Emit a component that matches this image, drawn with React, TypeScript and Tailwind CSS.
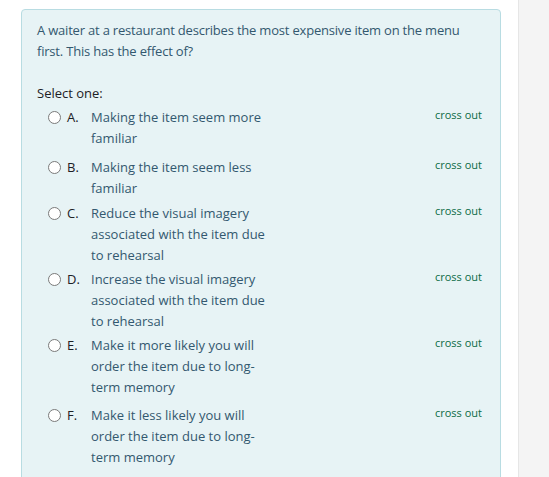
const options = [
  { letter: "A.", text: "Making the item seem more familiar", extra: "mt-0" },
  { letter: "B.", text: "Making the item seem less familiar", extra: "mt-[8px]" },
  { letter: "C.", text: "Reduce the visual imagery associated with the item due to rehearsal", extra: "mt-[4px]" },
  { letter: "D.", text: "Increase the visual imagery associated with the item due to rehearsal", extra: "mt-[3px]" },
  { letter: "E.", text: "Make it more likely you will order the item due to long-term memory", extra: "mt-[3px]" },
  { letter: "F.", text: "Make it less likely you will order the item due to long-term memory", extra: "mt-[7px]" },
];

export default function App() {
  return (
    <div
      className="flex h-[477px] w-[549px] overflow-hidden bg-white"
      style={{ fontFamily: '"Open Sans", "Liberation Sans", sans-serif' }}
    >
      <div className="w-[518px] shrink-0 pl-[21px] pr-[17px] pt-[9px]">
        <div className="h-[500px] rounded-t-[4px] border border-[#b8dce2] bg-[#e7f3f5] pl-[15px] pr-[18px] pt-[10px] text-[13px]">
          <p className="leading-[21px] tracking-[-0.2px] text-[#33586f]">
            A waiter at a restaurant describes the most expensive item on the menu first. This has the effect of?
          </p>
          <p className="mt-[21px] leading-[21px] text-[#1d2125]">Select one:</p>
          <div className="mt-[3px] flex flex-col">
            {options.map((o) => (
              <div key={o.letter} className={`flex items-start ${o.extra}`}>
                <div className="flex h-[21px] w-[24px] shrink-0 items-center justify-end">
                  <span className="block h-[13px] w-[13px] rounded-full border border-[#7a7a7a] bg-white" />
                </div>
                <span className="ml-[6px] w-[24px] shrink-0 leading-[21px] text-[#1d2125]">{o.letter}</span>
                <span className="w-[182px] shrink-0 leading-[21px] text-[#33586f]">{o.text}</span>
                <span className="ml-auto mt-[-3px] text-[11px] leading-[21px] text-[#0b6b45]">cross out</span>
              </div>
            ))}
          </div>
        </div>
      </div>
      <div className="flex-1 border-l border-[#e6e6e6] bg-[#f4f4f4]" />
    </div>
  );
}
